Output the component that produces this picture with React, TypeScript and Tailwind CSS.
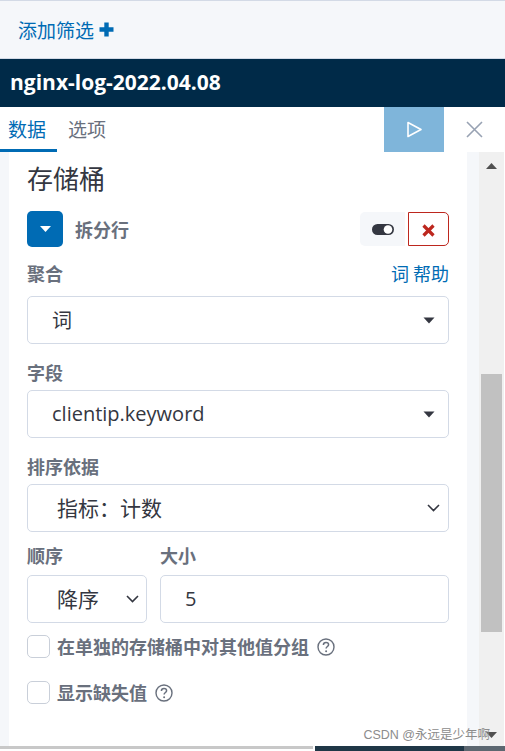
import React from "react";

const F = { fontFamily: '"Noto Sans CJK SC", sans-serif' };

function Caret() {
  return (
    <svg width="12" height="7" viewBox="0 0 12 7">
      <path d="M0.5 0.5 L11.5 0.5 L6 6.5 Z" fill="#343741" />
    </svg>
  );
}

function Chevron() {
  return (
    <svg width="13" height="8" viewBox="0 0 13 8">
      <path d="M1 1 L6.5 6.5 L12 1" fill="none" stroke="#343741" strokeWidth="1.6" />
    </svg>
  );
}

function Help() {
  return (
    <svg width="18" height="18" viewBox="0 0 18 18">
      <circle cx="9" cy="9" r="8" fill="none" stroke="#69707d" strokeWidth="1.4" />
      <path d="M6.4 7 C6.4 5.4 7.6 4.6 9 4.6 C10.5 4.6 11.6 5.5 11.6 6.8 C11.6 8.4 9.1 8.6 9.1 10.5" fill="none" stroke="#69707d" strokeWidth="1.5" />
      <circle cx="9.1" cy="13.2" r="1" fill="#69707d" />
    </svg>
  );
}

export default function App() {
  return (
    <div
      className="w-[505px] h-[751px] overflow-hidden relative flex flex-col bg-white"
      style={F}
    >
      {/* filter bar */}
      <div className="h-[59px] shrink-0 bg-[#f5f7fa] border-t border-b border-[#d3dae6] flex items-center pl-[18px]">
        <span className="text-[19px] leading-none text-[#006bb4]">添加筛选</span>
        <svg className="ml-[5px]" width="15" height="15" viewBox="0 0 15 15">
          <path d="M5.3 0.5 H9.7 V5.3 H14.5 V9.7 H9.7 V14.5 H5.3 V9.7 H0.5 V5.3 H5.3 Z" fill="#006bb4" />
        </svg>
      </div>

      {/* title bar */}
      <div className="h-[48px] shrink-0 bg-[#002a48] flex items-center pl-[10px]">
        <span
          className="text-white font-bold text-[21px]"
          style={{ fontFamily: '"Open Sans", "Noto Sans CJK SC", sans-serif' }}
        >
          nginx-log-2022.04.08
        </span>
      </div>

      {/* tabs */}
      <div className="h-[45px] shrink-0 bg-white flex items-stretch">
        <div className="w-[57px] flex items-center pl-[8px] border-b-[3px] border-[#006bb4] text-[19px] text-[#006bb4] pt-[3px]">
          数据
        </div>
        <div className="flex items-center pl-[11px] text-[19px] text-[#69707d]">选项</div>
        <div className="flex-1" />
        <div className="w-[60px] bg-[#7fb5da] flex items-center justify-center">
          <svg width="17" height="17" viewBox="0 0 17 17">
            <path d="M2 1.5 L15 8.5 L2 15.5 Z" fill="none" stroke="white" strokeWidth="1.6" strokeLinejoin="round" />
          </svg>
        </div>
        <div className="w-[61px] flex items-center justify-center">
          <svg width="17" height="17" viewBox="0 0 17 17">
            <path d="M1 1 L16 16 M16 1 L1 16" stroke="#98a2b3" strokeWidth="1.6" />
          </svg>
        </div>
      </div>

      {/* main */}
      <div className="flex-1 flex min-h-0">
        <div className="w-[9px] bg-[#f5f7fa]" />
        <div className="w-[458px] bg-white px-[18px] pt-[10px]">
          <div className="h-[32px] text-[26px] leading-[32px] text-[#343741]">存储桶</div>

          <div className="mt-[17px] h-[36px] flex items-center">
            <div className="w-[36px] h-[36px] rounded-[5px] bg-[#006bb4] flex items-center justify-center">
              <svg width="11" height="6" viewBox="0 0 11 6">
                <path d="M0 0 H11 L5.5 6 Z" fill="white" />
              </svg>
            </div>
            <span className="ml-[12px] text-[18px] font-bold text-[#69707d]">拆分行</span>
            <div className="flex-1" />
            <div className="h-[34px] flex">
              <div className="w-[45px] bg-[#f5f7fa] rounded-l-[5px] flex items-center justify-center">
                <svg width="22" height="11" viewBox="0 0 22 11">
                  <rect x="0" y="0" width="22" height="11" rx="5.5" fill="#343741" />
                  <circle cx="16" cy="5.5" r="4.3" fill="white" />
                </svg>
              </div>
              <div className="ml-[3px] w-[41px] border border-[#bd271e] rounded-r-[5px] flex items-center justify-center pt-[3px]">
                <svg width="13" height="13" viewBox="0 0 13 13">
                  <path d="M1.5 1.5 L11.5 11.5 M11.5 1.5 L1.5 11.5" stroke="#bd271e" strokeWidth="3.2" />
                </svg>
              </div>
            </div>
          </div>

          <div className="mt-[14px] h-[24px] flex items-center justify-between">
            <span className="text-[18px] font-bold text-[#69707d]">聚合</span>
            <span className="text-[18px] text-[#006bb4]">词 帮助</span>
          </div>
          <div className="mt-[11px] h-[48px] border border-[#d3dae6] rounded-[5px] flex items-center pl-[24px] pr-[13px]">
            <span className="flex-1 text-[20px] text-[#343741]">词</span>
            <Caret />
          </div>

          <div className="mt-[16px] h-[24px] flex items-center">
            <span className="text-[18px] font-bold text-[#69707d]">字段</span>
          </div>
          <div className="mt-[6px] h-[48px] border border-[#d3dae6] rounded-[5px] flex items-center pl-[24px] pr-[13px]">
            <span
              className="flex-1 text-[20px] text-[#343741]"
              style={{ fontFamily: '"Open Sans", "Noto Sans CJK SC", sans-serif' }}
            >
              clientip.keyword
            </span>
            <Caret />
          </div>

          <div className="mt-[16px] h-[24px] flex items-center">
            <span className="text-[18px] font-bold text-[#69707d]">排序依据</span>
          </div>
          <div className="mt-[6px] h-[48px] border border-[#d3dae6] rounded-[5px] flex items-center pl-[29px] pr-[8px]">
            <span className="flex-1 text-[21px] text-[#343741]">指标：计数</span>
            <Chevron />
          </div>

          <div className="mt-[11px] h-[24px] flex items-center">
            <span className="w-[133px] text-[18px] font-bold text-[#69707d]">顺序</span>
            <span className="text-[18px] font-bold text-[#69707d]">大小</span>
          </div>
          <div className="mt-[8px] h-[48px] flex gap-[13px]">
            <div className="w-[120px] border border-[#d3dae6] rounded-[5px] flex items-center pl-[29px] pr-[7px]">
              <span className="flex-1 text-[21px] text-[#343741]">降序</span>
              <Chevron />
            </div>
            <div className="flex-1 border border-[#d3dae6] rounded-[5px] flex items-center pl-[24px]">
              <span
                className="text-[20px] text-[#343741]"
                style={{ fontFamily: '"Open Sans", sans-serif' }}
              >
                5
              </span>
            </div>
          </div>

          <div className="mt-[12px] h-[23px] flex items-center">
            <div className="w-[23px] h-[23px] border border-[#c9cfd9] rounded-[5px] bg-white" />
            <span className="ml-[7px] text-[18px] font-bold text-[#69707d]">在单独的存储桶中对其他值分组</span>
            <span className="ml-[8px] flex items-center">
              <Help />
            </span>
          </div>

          <div className="mt-[23px] h-[23px] flex items-center">
            <div className="w-[23px] h-[23px] border border-[#c9cfd9] rounded-[5px] bg-white" />
            <span className="ml-[7px] text-[18px] font-bold text-[#69707d]">显示缺失值</span>
            <span className="ml-[8px] flex items-center">
              <Help />
            </span>
          </div>
        </div>
        <div className="w-[12px] bg-[#f5f7fa]" />
        {/* scrollbar */}
        <div className="w-[25px] bg-[#f0f0f0] flex flex-col items-center">
          <svg className="mt-[11px]" width="11" height="6" viewBox="0 0 11 6">
            <path d="M0 6 H11 L5.5 0 Z" fill="#505050" />
          </svg>
          <div className="mt-[205px] w-[21px] h-[258px] bg-[#c1c1c1]" />
          <div className="flex-1" />
          <svg className="mb-[8px]" width="11" height="6" viewBox="0 0 11 6">
            <path d="M0 0 H11 L5.5 6 Z" fill="#505050" />
          </svg>
        </div>
        <div className="w-[1px] bg-white" />
      </div>

      {/* bottom strip */}
      <div className="h-[5px] shrink-0 flex">
        <div className="w-[313px] h-[3px] bg-[#c8c8c8]" />
        <div className="w-[2px]" />
        <div className="w-[149px] bg-[#1f3747]" />
        <div className="flex-1 bg-[#5c6770]" />
      </div>

      {/* watermark */}
      <div
        className="absolute right-[15px] bottom-[10px] text-[12.5px] leading-none text-[#8c8c8c]"
        style={{ fontFamily: '"Liberation Sans", "Noto Sans CJK SC", sans-serif' }}
      >
        CSDN @永远是少年啊
      </div>
    </div>
  );
}
